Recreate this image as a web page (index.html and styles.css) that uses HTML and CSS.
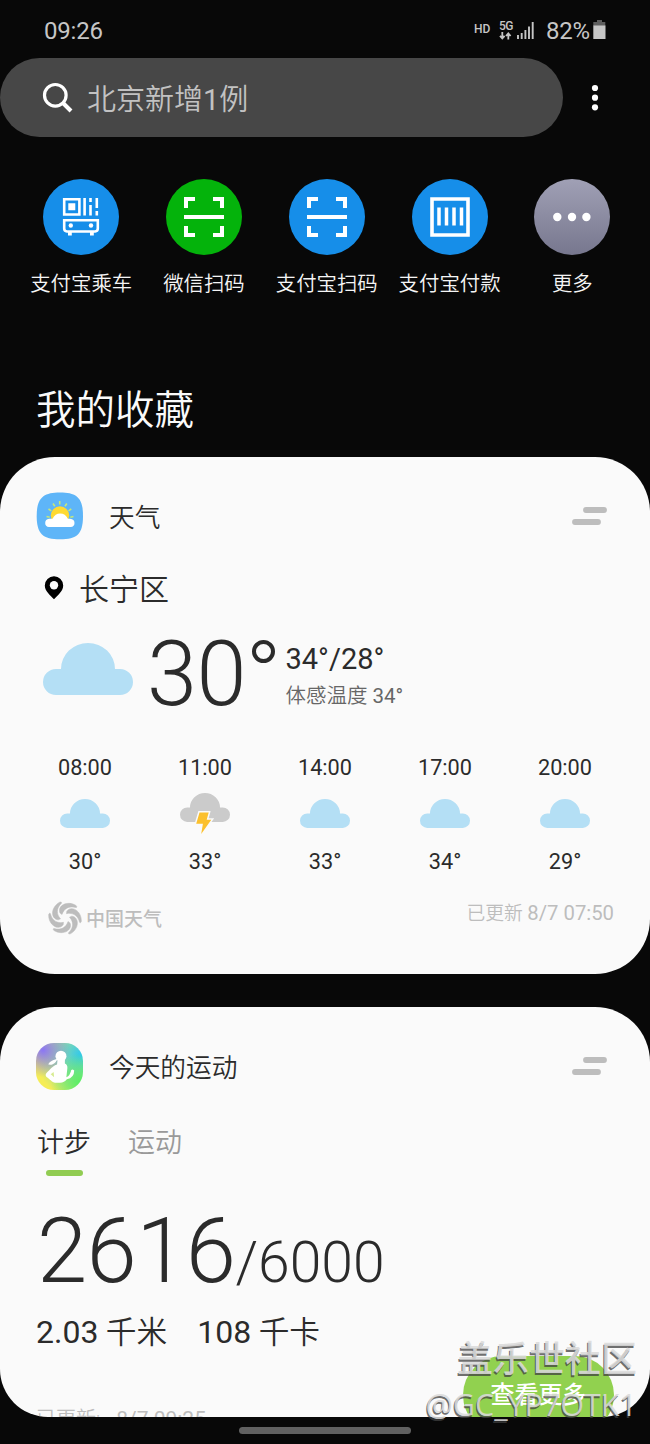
FILE: index.html
```html
<!DOCTYPE html>
<html lang="zh-CN">
<head>
<meta charset="utf-8">
<title>我的收藏</title>
<link rel="stylesheet" href="styles.css">
</head>
<body>
<svg class="defs" width="0" height="0" aria-hidden="true">
  <defs>
    <symbol id="cloud" viewBox="0 0 90 52"><path d="M13 52a13 13 0 0 1 0-26H18a27 26 0 0 1 54 0h5a13 13 0 0 1 0 26z"/></symbol>
    <symbol id="scan" viewBox="0 0 40 40"><path d="M2 11V2h9M29 2h9v9M38 29v9h-9M11 38H2v-9" fill="none" stroke="#fff" stroke-width="4"/><path d="M0 18h40v4H0z" fill="#fff"/></symbol>
    <symbol id="handle" viewBox="0 0 36 18"><path d="M14 3h18M3 15h23" stroke="#bdbdbd" stroke-width="5.800" stroke-linecap="round"/></symbol>
  </defs>
</svg>
<div class="phone">
  <header class="status">
    <span class="clock">09:26</span>
    <div class="indicators">
      <span class="hd">HD</span>
      <div class="network"><span>5G</span>
        <svg width="13" height="8" viewBox="0 0 13 8"><path d="M3.300 0v6M1 3.800l2.300 2.600 2.300-2.600M9.300 7.500V1.500M7 4l2.300-2.600L11.600 4" fill="none" stroke="#c6c6c6" stroke-width="1.800"/></svg>
      </div>
      <svg class="signal" width="17" height="17" viewBox="0 0 17 17"><path d="M1 17v-4M4.700 17v-6M8.400 17V8M12 17V4.500M15.700 17V0" stroke="#c6c6c6" stroke-width="1.900"/></svg>
      <span class="percent">82%</span>
      <svg class="battery" width="13" height="19" viewBox="0 0 13 19"><path d="M4 0h5v2h3.300v4H.3V2H4z" fill="#5e5e5e"/><path d="M.3 5.500h12.200V19H.3z" fill="#c6c6c6"/></svg>
    </div>
  </header>

  <div class="searchrow">
    <div class="search">
      <svg width="32" height="32" viewBox="0 0 32 32"><circle cx="13.300" cy="13.300" r="10.800" fill="none" stroke="#fff" stroke-width="3.200"/><path d="M21 21l8 8" stroke="#fff" stroke-width="4"/></svg>
      <span>北京新增<b>1</b>例</span>
    </div>
    <svg class="kebab" width="8" height="28" viewBox="0 0 8 28"><circle cx="4" cy="4" r="3.100"/><circle cx="4" cy="13.700" r="3.100"/><circle cx="4" cy="23.300" r="3.100"/></svg>
  </div>

  <nav class="shortcuts">
    <div class="shortcut"><div class="disc blue">
      <svg width="38" height="40" viewBox="0 0 38 40"><g fill="none" stroke="#fff" stroke-width="2.600"><path d="M2.200 2.200h15.200v15.300H2.200zM22.600 1v17.500M28.500 8v10.500M34.800 1v10M2.200 23.200h33.600v8.300q0 2.700-2.700 3H5q-2.800-.3-2.800-3z"/></g><path d="M6.300 6.300h7v7h-7zM27.200 1h2.600v4h-2.600zM33.500 14h2.600v4.500h-2.600zM6 35h3.800v3.500H6zM28 35h3.800v3.500H28z" fill="#fff"/><circle cx="8.800" cy="28.500" r="2.200" fill="#fff"/><circle cx="29" cy="28.500" r="2.200" fill="#fff"/></svg>
    </div><span>支付宝乘车</span></div>
    <div class="shortcut"><div class="disc green"><svg width="40" height="40"><use href="#scan"/></svg></div><span>微信扫码</span></div>
    <div class="shortcut"><div class="disc blue"><svg width="40" height="40"><use href="#scan"/></svg></div><span>支付宝扫码</span></div>
    <div class="shortcut"><div class="disc blue"><svg width="40" height="40" viewBox="0 0 40 40"><path d="M2 2h36v36H2z" fill="none" stroke="#fff" stroke-width="3.600"/><path d="M9 10.500v18M16.500 10.500v18M24 10.500v18M31.500 10.500v18" stroke="#fff" stroke-width="3.500"/></svg></div><span>支付宝付款</span></div>
    <div class="shortcut"><div class="disc gray"><svg width="40" height="10" viewBox="0 0 40 10"><g fill="#fff"><circle cx="5.300" cy="5" r="4.200"/><circle cx="20" cy="5" r="4.200"/><circle cx="34.400" cy="5" r="4.200"/></g></svg></div><span>更多</span></div>
  </nav>

  <h1 class="heading">我的收藏</h1>

  <section class="card weather">
    <div class="cardhead">
      <svg class="appicon" width="48" height="48" viewBox="0 0 48 48"><path d="M24 .5C41 .5 47 6 47 24s-6 23.300-23 23.300S.7 42 .7 24 7 .5 24 .5z" fill="#5eb5f8"/><circle cx="24" cy="23.500" r="9.200" fill="#ffda32"/><path d="M10.500 24.500l3.200.8M12.500 17l2.800 1.800M17 11.500l1.800 2.800M23.700 9v3.500M30.800 11.500L29 14.300M35.300 17l-2.800 1.800M37.500 24.500l-3.200.8" stroke="#c4e67b" stroke-width="1.600"/><path d="M13 35q-3.800-.3-3.800-4t4-4.200h3.300c1.800-3.400 4.300-5.300 7.700-5.300s6 1.900 7.700 5.300H34q4.500.5 4.500 4.200T34.700 35z" fill="#fff"/></svg>
      <h2>天气</h2>
      <svg class="handle" width="36" height="18"><use href="#handle"/></svg>
    </div>
    <div class="place">
      <svg width="20" height="25" viewBox="0 0 20 25"><path d="M10 1.200a9.200 9.200 0 0 0-9.200 9.200C.8 16.500 7 20.500 10 24.300c3-3.800 9.200-7.800 9.200-13.900A9.200 9.200 0 0 0 10 1.200z"/><circle cx="10" cy="10.300" r="4.200" fill="#fafafa"/></svg>
      <span>长宁区</span>
    </div>
    <div class="current">
      <svg class="bigcloud" width="90" height="52"><use href="#cloud"/></svg>
      <span class="temp">30</span>
      <span class="degree"></span>
      <div class="range"><span class="hilo">34°/28°</span><span class="feels">体感温度 <b>34°</b></span></div>
    </div>
    <div class="hours">
      <div class="hour"><span>08:00</span><svg width="50" height="42" viewBox="0 0 50 42"><use href="#cloud" y="6" width="50" height="29"/></svg><span>30°</span></div>
      <div class="hour"><span>11:00</span><svg width="50" height="42" viewBox="0 0 50 42"><use class="storm" href="#cloud" width="50" height="29"/><path d="M19.500 19.500h9.200l-2 7.200h4.600L21.200 41l1.700-10.200h-6.700z" fill="#fbc02d" stroke="#fafafa" stroke-width="3" paint-order="stroke"/></svg><span>33°</span></div>
      <div class="hour"><span>14:00</span><svg width="50" height="42" viewBox="0 0 50 42"><use href="#cloud" y="6" width="50" height="29"/></svg><span>33°</span></div>
      <div class="hour"><span>17:00</span><svg width="50" height="42" viewBox="0 0 50 42"><use href="#cloud" y="6" width="50" height="29"/></svg><span>34°</span></div>
      <div class="hour"><span>20:00</span><svg width="50" height="42" viewBox="0 0 50 42"><use href="#cloud" y="6" width="50" height="29"/></svg><span>29°</span></div>
    </div>
    <div class="source">
      <svg width="34" height="34" viewBox="-17 -17 34 34"><defs><path id="blade" d="M-5-5C-8-12 2-18 11-12.500 12-11.500 12-10.500 11-10.500 4-12.500-1-9.500-3-3.500z"/></defs><g fill="#bdbdbd" stroke="#bdbdbd" stroke-width=".5"><use href="#blade"/><use href="#blade" transform="rotate(60)"/><use href="#blade" transform="rotate(120)"/><use href="#blade" transform="rotate(180)"/><use href="#blade" transform="rotate(240)"/><use href="#blade" transform="rotate(300)"/></g></svg>
      <strong>中国天气</strong>
      <span class="updated">已更新 <b>8/7 07:50</b></span>
    </div>
  </section>

  <section class="card steps">
    <div class="cardhead">
      <div class="appicon fitness"><svg width="47" height="47" viewBox="0 0 48 48"><g fill="#fff"><circle cx="25.500" cy="13.500" r="5.600"/><path d="M22 16c-1 3-4 7-9.500 6 1-3 5-5 9.500-6z"/><path d="M22 17h7.500v4q3 1.500 2.500 5l-1 9q4-2 5-7.500l1.500-.5 1.500 1q0 7.500-7.500 9-2.500 3.500-7 3.500h-5c-3 0-5-3.500-9-6q-1.500-1.500 0-3.500c4-4 7-8 11-9z"/></g><path d="M18 29.500l-3 2.500 3.500 3z" fill="#d7ec91"/></svg></div>
      <h2>今天的运动</h2>
      <svg class="handle" width="36" height="18"><use href="#handle"/></svg>
    </div>
    <div class="tabs"><span class="tab active">计步</span><span class="tab">运动</span></div>
    <div class="count"><span>2616</span><span class="goal">/6000</span></div>
    <div class="stats"><span><b>2.03</b> 千米</span><span><b>108</b> 千卡</span></div>
    <div class="cardfoot"><span class="updated">已更新:<b>8/7 09:25</b></span><button class="more">查看更多</button></div>
  </section>

  <footer class="gesture"><div class="homebar"></div></footer>
  <div class="watermark"><div class="community">盖乐世社区</div><div class="author">@GC_YP7OTK1</div></div>
</div>
</body>
</html>
```
FILE: styles.css
```css
* { box-sizing: border-box; }
body { margin: 0; background: #080808; font-family: Roboto, "Noto Sans CJK SC", sans-serif; }
svg { display: block; flex: none; }
span, strong { white-space: nowrap; }
b { font-weight: 400; }
.defs { position: absolute; }
.phone { position: relative; width: 650px; height: 1444px; overflow: hidden; background: #080808; }

.status { display: flex; justify-content: space-between; height: 58px; padding: 17px 44px 0; color: #c6c6c6; font-size: 24px; line-height: 28px; }
.clock { letter-spacing: -.2px; }
.indicators { display: flex; align-items: flex-start; }
.hd { width: 25px; margin-left: -1px; font-size: 12px; font-weight: 500; line-height: 25px; }
.network { width: 18px; height: 22px; padding-top: 3px; }
.network span { display: block; font-size: 12px; font-weight: 500; line-height: 12px; height: 12px; letter-spacing: -.6px; }
.signal { margin: 5px 12px 0 0; }
.percent { width: 47px; letter-spacing: -.3px; }
.battery { margin-top: 3px; }

.searchrow { display: flex; height: 79px; align-items: center; }
.search { display: flex; align-items: center; width: 563px; height: 79px; border-radius: 40px; background: #474747; padding: 1px 0 0 42px; gap: 13px; }
.search span { padding-top: 3px; color: #c2c2c2; font-size: 29px; line-height: 40px; font-weight: 350; }
.kebab { margin-left: 28px; fill: #fff; }

.shortcuts { display: grid; grid-template-columns: repeat(5, 122.800px); padding: 42px 0 0 19.800px; height: 222px; }
.shortcut { display: flex; flex-direction: column; align-items: center; }
.shortcut span { margin-top: 14px; font-size: 20.400px; line-height: 30px; color: #f5f5f5; font-weight: 350; }
.disc { display: flex; align-items: center; justify-content: center; width: 76px; height: 76px; border-radius: 50%; }
.blue { background: #168ee9; }
.green { background: #04b30b; }
.gray { background: linear-gradient(#a0a0b5, #77778e); }
.heading { margin: 0; height: 98px; padding: 23px 0 0 36px; color: #fafafa; font-size: 39.500px; font-weight: 350; line-height: 58px; }

.card { position: relative; background: #fafafa; color: #2b2b2b; overflow: hidden; }
.weather { height: 517px; border-radius: 55px; padding: 35px 36px 0; }
.steps { height: 410px; margin-top: 33px; border-radius: 55px 55px 48px 48px; padding: 35px 36px 0; }
.cardhead { display: flex; align-items: center; height: 48px; }
.cardhead h2 { flex: 1; margin: 4px 0 0 25px; font-size: 25.700px; line-height: 40px; font-weight: 350; }
.fitness + h2 { margin-left: 26px; }
.handle { margin-right: 6.500px; }
.place { display: flex; align-items: center; height: 44px; margin-top: 27px; padding-left: 8px; gap: 15px; font-size: 30px; font-weight: 350; line-height: 44px; }
.place svg { margin-top: -4px; }
.place span { padding-top: 2px; }
.current { display: flex; height: 86px; margin-top: 21px; padding-left: 7px; }
.bigcloud { margin-top: 11px; fill: #b4dff5; }
.temp { width: 112px; padding-left: 14px; font-size: 90px; line-height: 86px; font-weight: 300; letter-spacing: -.5px; }
.degree { width: 23px; height: 23px; margin: 8px 0 0 6.500px; border: 4px solid #2b2b2b; border-radius: 50%; }
.range { display: flex; flex-direction: column; margin-left: 11px; }
.hilo { font-size: 29px; line-height: 34px; margin-top: 10px; }
.feels { color: #666; font-size: 20.500px; line-height: 28px; margin-top: 6px; font-weight: 350; }
.hours { display: grid; grid-template-columns: repeat(5, 120px); margin: 36px 0 0 -11px; }
.hour { display: flex; flex-direction: column; align-items: center; font-size: 21.700px; line-height: 28px; height: 124px; }
.hour svg { margin: 11px 0 13px; fill: #b4dff5; }
.hour .storm { fill: #cbcbcb; }
.source { display: flex; height: 40px; margin-top: 18px; padding: 5px 0 0 12px; color: #bdbdbd; }
.source strong { margin: 2px 0 0 4px; font-size: 19px; line-height: 34px; font-weight: 500; }
.source .updated { margin: -2px 0 0 auto; font-size: 18.800px; line-height: 28px; font-weight: 350; }
.source .updated b { font-size: 20.300px; }
.fitness { width: 47px; height: 47px; border-radius: 18px; background: radial-gradient(circle at 15% 15%, #8b76f5, transparent 48%), radial-gradient(circle at 95% 85%, #58ef62, transparent 50%), radial-gradient(circle at 95% 25%, #31c8ee, transparent 80%), #f5ed55; }
.tabs { display: flex; gap: 37px; height: 64px; margin-top: 32px; padding: 1px 0 0 1px; font-size: 27px; line-height: 40px; }
.tab { color: #999; font-weight: 350; }
.active { color: #2b2b2b; }
.active::after { content: ""; display: block; width: 37px; height: 6px; margin: 7px auto 0; border-radius: 3px; background: #91cc52; }
.count { display: flex; align-items: baseline; height: 90px; margin-top: 20px; padding-left: 1px; font-size: 90.500px; line-height: 90px; font-weight: 300; letter-spacing: -.6px; }
.goal { font-size: 57px; letter-spacing: 0; font-weight: 300; }
.stats { display: flex; gap: 30px; height: 48px; margin-top: 12px; font-size: 30.700px; line-height: 48px; font-weight: 350; }
.stats b { font-size: 32px; }
.cardfoot { display: flex; justify-content: space-between; }
.cardfoot .updated { margin-top: 48px; color: #bdbdbd; font-size: 20px; line-height: 30px; font-weight: 350; }
.cardfoot .updated b { font-size: 21px; margin-left: 16px; }
.more { width: 151px; height: 78px; border: 0; border-radius: 39px; background: #91d14f; color: #fff; font: 500 24px/74px "Noto Sans CJK SC", sans-serif; padding: 0 0 4px; }
.gesture { display: flex; justify-content: center; padding-top: 10px; }
.homebar { width: 172px; height: 7px; border-radius: 4px; background: #616161; }
.watermark { position: absolute; right: 13px; top: 1334px; text-align: right; white-space: nowrap; color: rgba(218,218,218,.88); text-shadow: -1px 2px 0 rgba(65,65,65,.75); }
.community { font-size: 36px; line-height: 52px; font-weight: 500; }
.author { margin-top: -4px; font: 400 30.500px/44px "Open Sans", "Noto Sans", sans-serif; }
```
